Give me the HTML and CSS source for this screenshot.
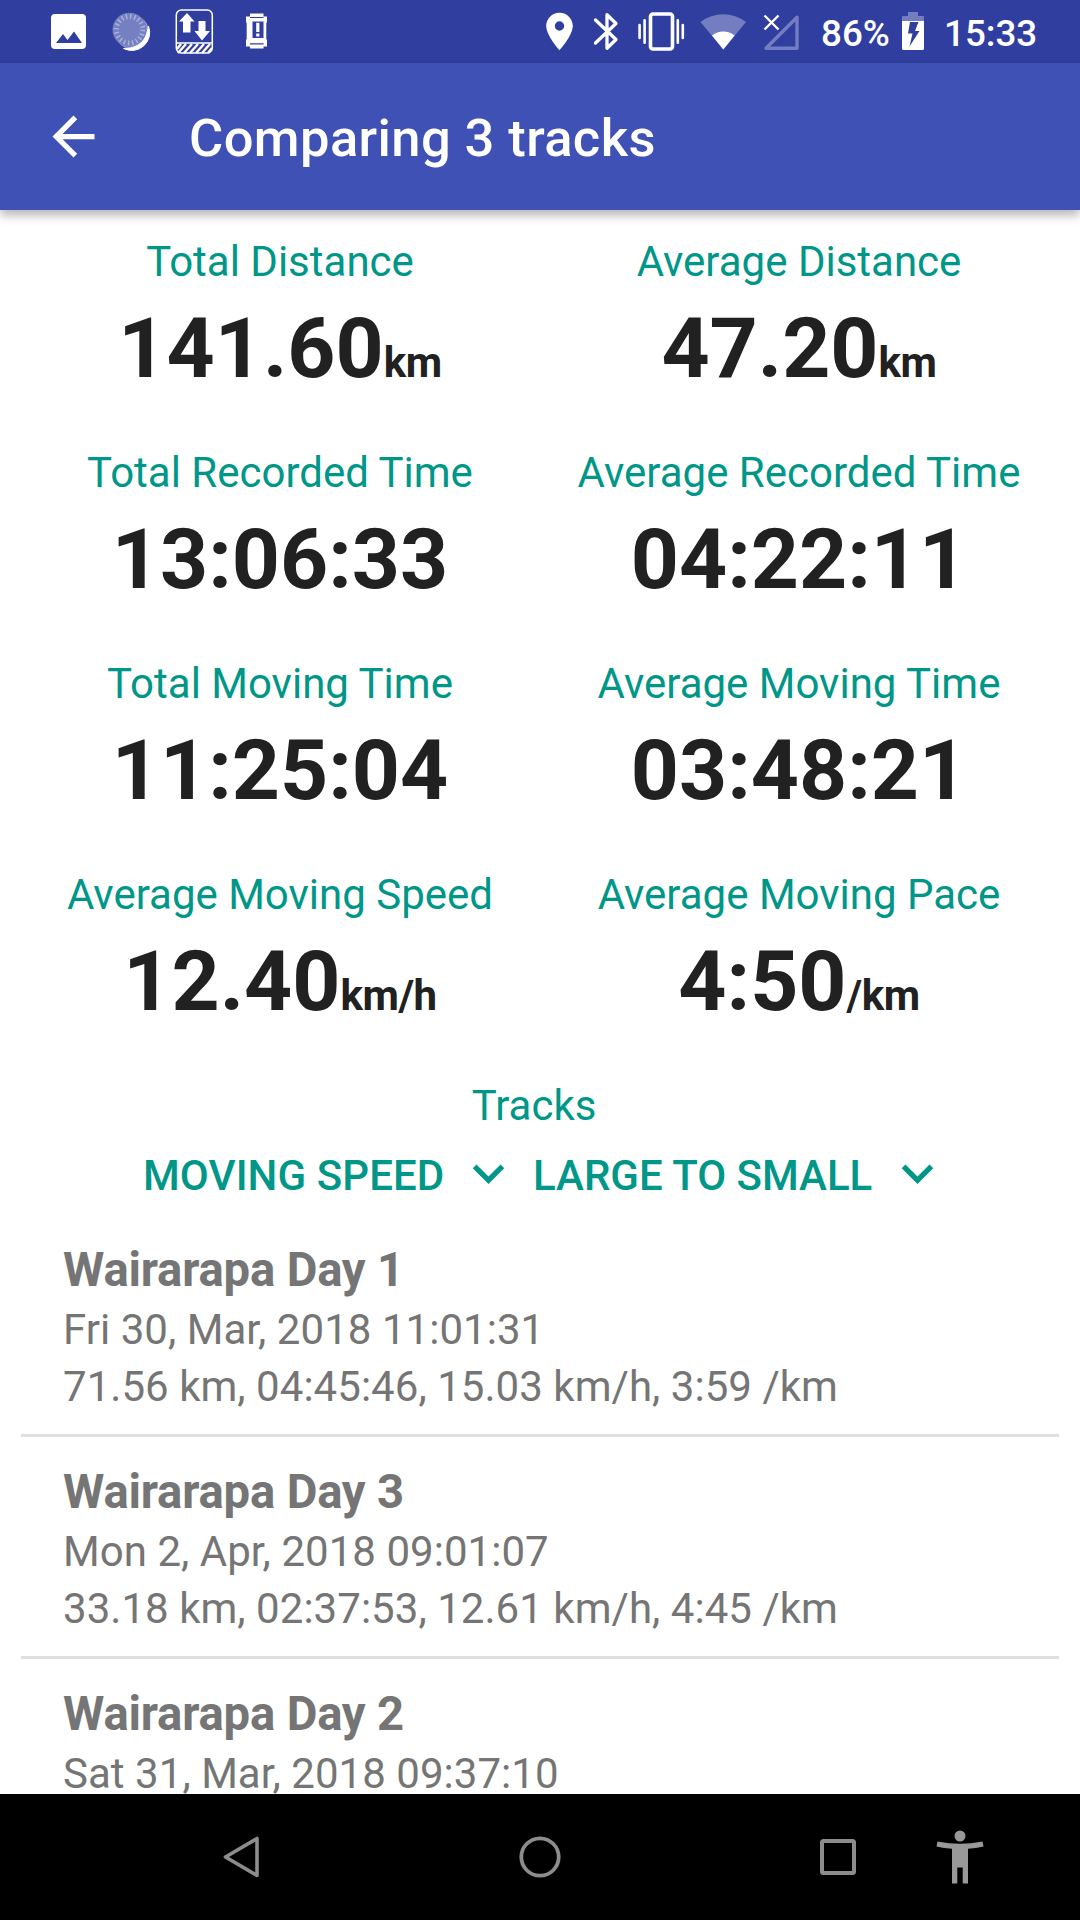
FILE: index.html
```html
<!DOCTYPE html>
<html lang="en">
<head>
<meta charset="utf-8">
<title>Comparing 3 tracks</title>
<link rel="stylesheet" href="styles.css">
</head>
<body>
<div class="screen">
  <header class="status">
    <div class="status-left">
      <svg class="slot-notif" viewBox="0 0 63 63"><path fill="#fff" fill-rule="evenodd" d="M18 14h27a4 4 0 0 1 4 4v27a4 4 0 0 1-4 4h-27a4 4 0 0 1-4-4v-27a4 4 0 0 1 4-4zM19 43h26l-8-11.500-6.500 8.500-4.500-6z"/></svg>
      <svg class="slot-notif" viewBox="1 0 63 63"><circle cx="33.200" cy="32.200" r="17" fill="#8f98d0"/><path d="M49.500 26a18 18 0 0 1-25 22.500c12 1 23-8 25-22.500z" fill="#fff" stroke="#fff" stroke-width="1"/><circle cx="30.500" cy="29.700" r="17" fill="#7580c1"/><circle cx="30.500" cy="29.700" r="13.200" fill="none" stroke="#a9b0dc" stroke-width="5" stroke-dasharray="1.500 2.650"/></svg>
      <svg class="slot-notif" viewBox="0 0 63 63"><rect x="13.300" y="10" width="36" height="43" rx="5" fill="none" stroke="#fff" stroke-width="1.500"/><path fill="#fff" d="M24 13l7.500 8.500h-4v11h-7.500v-11h-4zM35.500 21h7v10h4.500l-8 9.500-7.500-9.500h4z"/><path d="M13 43h37" stroke="#fff" stroke-width="1.500"/><path d="M14 49l4-5M15 53l8-9M21 53l8-9M27 53l8-9M33 53l8-9M39 53l8-9M45 53l4-5" stroke="#fff" stroke-width="2.400"/></svg>
      <svg class="slot-notif" viewBox="0 0 63 63"><path fill="#fff" fill-rule="evenodd" d="M24 13.500h13.500v3h3.500v6h-.7v17h.7v7h-3.500v2h-13.500v-2h-4v-7h.7v-17h-.7v-6h4zM26.500 21.500v16.500h11v-16.500z"/><path d="M24 17.500h13.500M24 43.800h13.500" stroke="#303f9f" stroke-width="1.200"/><path fill="#fff" d="M30.200 22.700h3.200v9.300h-3.200zM30.200 33.500h3.200v3h-3.200z"/></svg>
    </div>
    <div class="status-right">
      <svg class="slot-pin" viewBox="0 0 47 63"><path fill="#fff" fill-rule="evenodd" d="M23.500 12.800c-7.500 0-13.300 6-13.300 13.300 0 9.600 13.300 24.200 13.300 24.200s13.300-14.600 13.300-24.200c0-7.300-5.800-13.300-13.300-13.300zm0 8.500a4.700 4.700 0 1 1 0 9.400 4.700 4.700 0 0 1 0-9.400z"/></svg>
      <svg class="slot-bt" viewBox="0 0 46 63"><path d="M12.500 20l20.500 19.500-9 8.700v-33.500l9 8.800-20.500 19.500" fill="none" stroke="#fff" stroke-width="3.300" stroke-linejoin="round" stroke-linecap="round"/></svg>
      <svg class="slot-vib" viewBox="0 0 64 63"><rect x="21.500" y="14" width="22" height="35" rx="2.500" fill="none" stroke="#fff" stroke-width="3.600"/><path d="M10.600 25v13M15.600 20.200v22.500M48.800 20.200v22.500M53.800 25v13" stroke="#fff" stroke-width="2.600" stroke-linecap="round"/></svg>
      <svg class="slot-wifi" viewBox="0 0 60 63"><path fill="#737dbf" d="M7.500 22a37 37 0 0 1 45.500 0l-22.700 27.500z"/><path fill="#fff" d="M19 35.500a18 18 0 0 1 22.600 0l-11.300 14z"/></svg>
      <svg class="slot-signal" viewBox="0 0 60 63"><path d="M13 48.200h31v-31z" fill="none" stroke="#737dbf" stroke-width="3.400" stroke-linejoin="round"/><path d="M11.500 15.500l14 14M25.500 15.500l-14 14" stroke="#fff" stroke-width="2.400"/></svg>
      <span class="percent">86%</span>
      <svg class="slot-battery" viewBox="0 0 30 63"><path fill="#737dbf" d="M10 12h10v4h5q1 0 1 1v4h-22v-4q0-1 1-1h5z"/><path fill="#fff" fill-rule="evenodd" d="M4 21h22v27.500q0 1.500-1.500 1.500h-19q-1.500 0-1.500-1.500zM12 22l-2 11.500h4.500l-3 13 10-15.500h-4.500l3.500-9z"/></svg>
      <span class="clock">15:33</span>
    </div>
  </header>

  <div class="appbar">
    <svg class="back" viewBox="0 0 24 24"><path fill="#fff" d="M20 11H7.830l5.590-5.590L12 4l-8 8 8 8 1.410-1.410L7.830 13H20z"/></svg>
    <h1 class="title">Comparing 3 tracks</h1>
  </div>

  <main class="content">
    <section class="stats">
      <div class="stat"><div class="label">Total Distance</div><div class="value">141.60<small class="unit">km</small></div></div>
      <div class="stat"><div class="label">Average Distance</div><div class="value">47.20<small class="unit">km</small></div></div>
      <div class="stat"><div class="label">Total Recorded Time</div><div class="value">13:06:33</div></div>
      <div class="stat"><div class="label">Average Recorded Time</div><div class="value">04:22:11</div></div>
      <div class="stat"><div class="label">Total Moving Time</div><div class="value">11:25:04</div></div>
      <div class="stat"><div class="label">Average Moving Time</div><div class="value">03:48:21</div></div>
      <div class="stat"><div class="label">Average Moving Speed</div><div class="value">12.40<small class="unit">km/h</small></div></div>
      <div class="stat"><div class="label">Average Moving Pace</div><div class="value">4:50<small class="unit">/km</small></div></div>
    </section>

    <h2 class="label tracks-heading">Tracks</h2>
    <div class="sorting">
      <button class="sort sort-field">MOVING SPEED<svg class="chevron" viewBox="0 0 24 24"><path fill="#009688" d="M16.590 8.590L12 13.170 7.410 8.590 6 10l6 6 6-6z"/></svg></button>
      <button class="sort sort-order">LARGE TO SMALL<svg class="chevron" viewBox="0 0 24 24"><path fill="#009688" d="M16.590 8.590L12 13.170 7.410 8.590 6 10l6 6 6-6z"/></svg></button>
    </div>

    <ul class="tracks">
      <li class="track"><div class="name">Wairarapa Day 1</div><div class="detail">Fri 30, Mar, 2018 11:01:31</div><div class="detail">71.56 km, 04:45:46, 15.03 km/h, 3:59 /km</div></li>
      <li class="track"><div class="name">Wairarapa Day 3</div><div class="detail">Mon 2, Apr, 2018 09:01:07</div><div class="detail">33.18 km, 02:37:53, 12.61 km/h, 4:45 /km</div></li>
      <li class="track"><div class="name">Wairarapa Day 2</div><div class="detail">Sat 31, Mar, 2018 09:37:10</div></li>
    </ul>
  </main>

  <nav class="navbar">
    <svg class="nav-back" viewBox="0 0 44 44"><path d="M36 3.500v37L4.500 22z" fill="none" stroke="#8c8c8c" stroke-width="3.600" stroke-linejoin="round"/></svg>
    <svg class="nav-home" viewBox="0 0 44 44"><circle cx="22" cy="22" r="18.700" fill="none" stroke="#8c8c8c" stroke-width="3.800"/></svg>
    <svg class="nav-recent" viewBox="0 0 44 44"><rect x="6" y="6" width="32" height="32" rx="1.500" fill="none" stroke="#8c8c8c" stroke-width="4"/></svg>
    <svg class="nav-access" viewBox="0 0 48 54"><circle cx="24" cy="6" r="5.500" fill="#999"/><path fill="#999" d="M1.500 11.500q22.500 4.600 45 0l1 5q-7.500 1.700-15.500 2.300v34.700h-5.300v-16h-5.400v16h-5.300v-34.700q-8-.6-15.500-2.300z"/></svg>
  </nav>
</div>
</body>
</html>
```
FILE: styles.css
```css
* { box-sizing: border-box; }

body {
  margin: 0;
  background: #fff;
  font-family: Roboto, sans-serif;
}

.screen {
  display: flex;
  flex-direction: column;
  width: 1080px;
  height: 1920px;
  overflow: hidden;
}

svg { display: block; flex: none; }

/* Status bar */
.status {
  display: flex;
  justify-content: space-between;
  flex: none;
  height: 63px;
  padding: 0 42px 0 37px;
  background: #303f9f;
  color: #fff;
  font-size: 36.75px;
  font-weight: 500;
  line-height: 67px;
}
.status-left, .status-right { display: flex; }
.status-left svg, .status-right svg { height: 63px; }
.slot-notif { width: 63px; }
.slot-pin { width: 47px; }
.slot-bt { width: 46px; }
.slot-vib { width: 64px; }
.slot-wifi { width: 60px; }
.slot-signal { width: 60px; }
.slot-battery { width: 30px; }
.percent { flex: none; width: 85px; padding-left: 8px; }
.clock { flex: none; width: 94px; margin-left: 16px; }
.status-right { width: 502px; }

/* App bar */
.appbar {
  display: flex;
  align-items: center;
  flex: none;
  z-index: 1;
  height: 147px;
  padding-left: 42px;
  background: #3f51b5;
  box-shadow: 0 5px 10px rgba(0, 0, 0, .3);
}
.back { width: 63px; height: 63px; }
.title {
  margin: 2px 0 0 84px;
  color: #fff;
  font-size: 52.5px;
  font-weight: 500;
  letter-spacing: .4px;
  line-height: 62px;
}

/* Content */
.content {
  flex: 1;
  min-height: 0;
  padding: 27px 21px 0;
  overflow: hidden;
}
.stats {
  display: grid;
  grid-template-columns: 1fr 1fr;
  grid-auto-rows: 211px;
  text-align: center;
}
.stat { padding-right: 1px; }
.label {
  color: #009688;
  font-size: 42px;
  font-weight: 400;
  line-height: 50px;
}
.value {
  margin-top: 13px;
  color: #212121;
  font-size: 84px;
  font-weight: 700;
  line-height: 98px;
}
.unit {
  font-size: 42px;
  letter-spacing: -.4px;
  line-height: 1;
}
.tracks-heading {
  margin: 0;
  padding-right: 12px;
  text-align: center;
}
.sorting {
  display: flex;
  margin-top: 11px;
  padding-left: 122px;
}
.sort {
  display: flex;
  justify-content: space-between;
  height: 63px;
  padding: 0;
  border: 0;
  background: none;
  color: #009688;
  font: 500 42px/68px Roboto, sans-serif;
}
.sort-field { width: 377px; letter-spacing: .1px; }
.sort-order { width: 416px; margin-left: 13px; }
.chevron { width: 63px; height: 63px; }

/* Track list */
.tracks {
  margin: 10px 0 0;
  padding: 0;
  list-style: none;
}
.track {
  height: 222px;
  padding: 27px 42px 0;
  border-bottom: 3px solid #dfdfdf;
  color: #757575;
}
.name {
  margin-bottom: 3px;
  font-size: 47.25px;
  font-weight: 700;
  letter-spacing: -.2px;
  line-height: 56px;
}
.detail {
  font-size: 42px;
  letter-spacing: .04px;
  line-height: 57px;
}

/* Navigation bar */
.navbar {
  display: flex;
  align-items: center;
  flex: none;
  height: 126px;
  padding-left: 221px;
  background: #000;
}
.nav-back, .nav-home, .nav-recent { width: 44px; height: 44px; }
.nav-home { margin-left: 253px; }
.nav-recent { margin-left: 254px; }
.nav-access { width: 48px; height: 54px; margin-left: 76px; }
```
